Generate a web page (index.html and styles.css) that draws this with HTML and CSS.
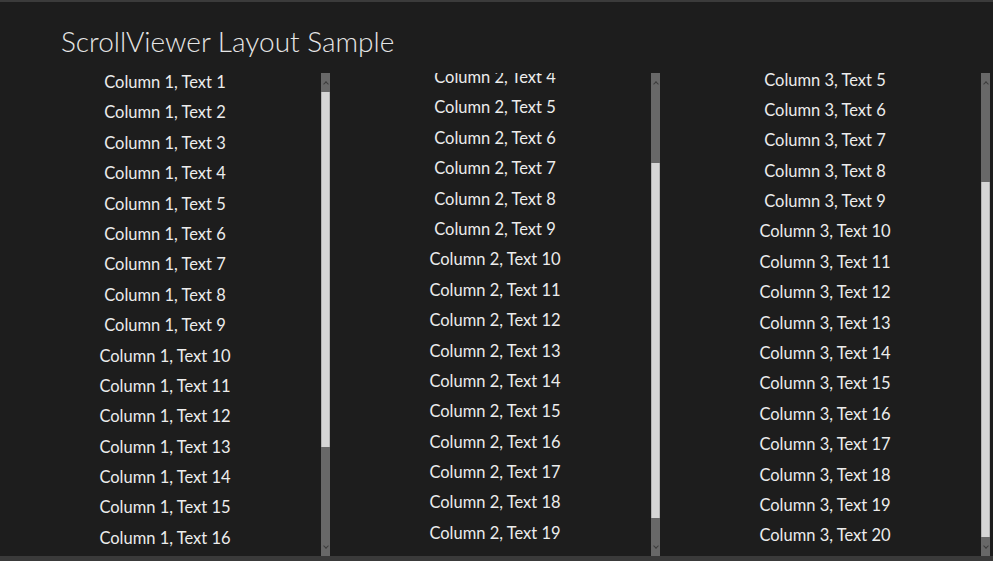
FILE: index.html
```html
<!DOCTYPE html>
<html lang="en">
<head>
<meta charset="utf-8">
<title>ScrollViewer Layout Sample</title>
<link rel="stylesheet" href="styles.css">
</head>
<body>
<div class="app">
  <h1 class="title">ScrollViewer Layout Sample</h1>
  <div class="columns">
    <section class="viewer">
      <div class="content">
        <ul class="list list-1">
          <li>Column 1, Text 1</li><li>Column 1, Text 2</li><li>Column 1, Text 3</li><li>Column 1, Text 4</li><li>Column 1, Text 5</li>
          <li>Column 1, Text 6</li><li>Column 1, Text 7</li><li>Column 1, Text 8</li><li>Column 1, Text 9</li><li>Column 1, Text 10</li>
          <li>Column 1, Text 11</li><li>Column 1, Text 12</li><li>Column 1, Text 13</li><li>Column 1, Text 14</li><li>Column 1, Text 15</li>
          <li>Column 1, Text 16</li>
        </ul>
      </div>
      <div class="scrollbar">
        <div class="sb-btn"><span class="arrow up"></span></div>
        <div class="sb-track">
          <div class="sb-gap" style="height:0px"></div>
          <div class="sb-thumb" style="height:355px"></div>
        </div>
        <div class="sb-btn"><span class="arrow down"></span></div>
      </div>
    </section>
    <section class="viewer">
      <div class="content">
        <ul class="list list-2">
          <li>Column 2, Text 4</li><li>Column 2, Text 5</li>
          <li>Column 2, Text 6</li><li>Column 2, Text 7</li><li>Column 2, Text 8</li><li>Column 2, Text 9</li><li>Column 2, Text 10</li>
          <li>Column 2, Text 11</li><li>Column 2, Text 12</li><li>Column 2, Text 13</li><li>Column 2, Text 14</li><li>Column 2, Text 15</li>
          <li>Column 2, Text 16</li><li>Column 2, Text 17</li><li>Column 2, Text 18</li><li>Column 2, Text 19</li><li>Column 2, Text 20</li>
        </ul>
      </div>
      <div class="scrollbar">
        <div class="sb-btn"><span class="arrow up"></span></div>
        <div class="sb-track">
          <div class="sb-gap" style="height:71px"></div>
          <div class="sb-thumb" style="height:355px"></div>
        </div>
        <div class="sb-btn"><span class="arrow down"></span></div>
      </div>
    </section>
    <section class="viewer">
      <div class="content">
        <ul class="list list-3">
          <li>Column 3, Text 5</li>
          <li>Column 3, Text 6</li><li>Column 3, Text 7</li><li>Column 3, Text 8</li><li>Column 3, Text 9</li><li>Column 3, Text 10</li>
          <li>Column 3, Text 11</li><li>Column 3, Text 12</li><li>Column 3, Text 13</li><li>Column 3, Text 14</li><li>Column 3, Text 15</li>
          <li>Column 3, Text 16</li><li>Column 3, Text 17</li><li>Column 3, Text 18</li><li>Column 3, Text 19</li><li>Column 3, Text 20</li>
        </ul>
      </div>
      <div class="scrollbar">
        <div class="sb-btn"><span class="arrow up"></span></div>
        <div class="sb-track">
          <div class="sb-gap" style="height:90px"></div>
          <div class="sb-thumb" style="height:355px"></div>
        </div>
        <div class="sb-btn"><span class="arrow down"></span></div>
      </div>
    </section>
  </div>
</div>
</body>
</html>
```

FILE: styles.css
```css
* { box-sizing: border-box; }
html, body { margin: 0; padding: 0; background: #1d1d1d; }
body { width: 993px; height: 561px; overflow: hidden; }
.app {
  height: 561px;
  display: flex;
  flex-direction: column;
  border-top: 2px solid #3b3b3b;
  border-bottom: 5px solid #3a3a3a;
  color: #ececec;
  font-family: Lato, "Open Sans", sans-serif;
}
.title {
  margin: 0;
  height: 71px;
  padding: 22px 0 0 61px;
  font-size: 28px;
  font-weight: 300;
  line-height: 34px;
  color: #e6e6e6;
  white-space: nowrap;
}
.columns {
  flex: 1;
  display: grid;
  grid-template-columns: 330px 330px 330px;
  min-height: 0;
}
.viewer {
  display: flex;
  min-height: 0;
  overflow: hidden;
}
.content {
  flex: 1;
  overflow: hidden;
  padding-left: 9px;
}
.list {
  list-style: none;
  margin: 0;
  padding: 0;
  text-align: center;
  font-size: 16.5px;
}
.list li {
  height: 30.4px;
  line-height: 30.4px;
  white-space: nowrap;
}
.list-1 { margin-top: -6px; }
.list-2 { margin-top: -11px; }
.list-3 { margin-top: -8.5px; }
.scrollbar {
  width: 9px;
  display: flex;
  flex-direction: column;
  background: #686868;
}
.sb-btn {
  height: 19px;
  flex: none;
  display: flex;
  align-items: center;
  justify-content: center;
}
.sb-track {
  flex: 1;
  display: flex;
  flex-direction: column;
}
.sb-gap { flex: none; }
.sb-thumb {
  flex: none;
  background: #d6d6d6;
  border-left: 1px solid #b4b4b4;
  border-right: 1px solid #b4b4b4;
}
.arrow {
  width: 4px;
  height: 4px;
  border-left: 1.5px solid #3c3c3c;
  border-top: 1.5px solid #3c3c3c;
}
.arrow.up { transform: translateY(1px) rotate(45deg); }
.arrow.down { transform: translateY(-1px) rotate(225deg); }
```
